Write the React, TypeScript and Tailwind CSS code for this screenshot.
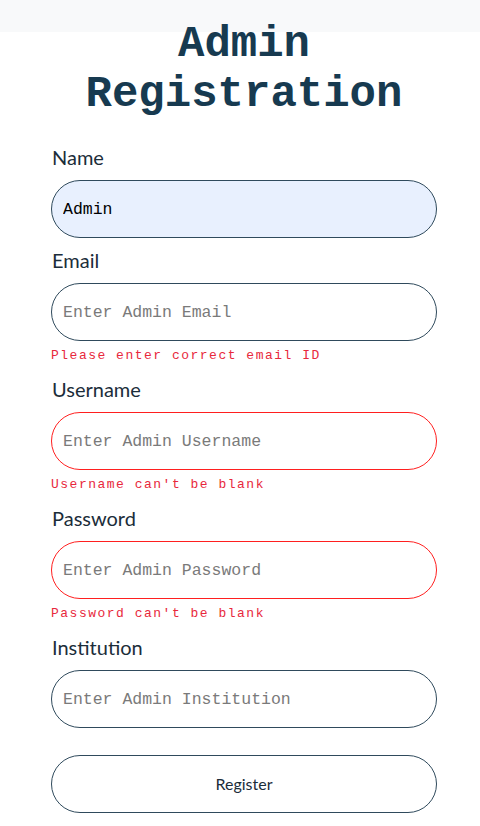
import React from "react";

const labelCls =
  "block text-[20px] leading-[30px] text-[#1b2d3a] mb-[8px] pl-[1px] font-['Lato','Open_Sans',sans-serif]";
const inputBase =
  "w-full h-[58px] rounded-full border outline-none px-[11px] text-[16.5px] font-['Courier_New','Liberation_Mono',monospace] placeholder:text-[#7a7a7a] text-black";
const errCls =
  "mt-[4px] text-[13px] leading-[22px] tracking-[1.5px] text-[#e8283c] font-['Courier_New','Liberation_Mono',monospace]";

function Field({
  label,
  placeholder,
  value,
  error,
  filled,
  first,
}: {
  label: string;
  placeholder: string;
  value?: string;
  error?: string;
  filled?: boolean;
  first?: boolean;
}) {
  const isBlank = error && error.includes("blank");
  return (
    <div className={first ? "" : "mt-[7px]"}>
      <label className={labelCls}>{label}</label>
      <input
        className={
          inputBase +
          " " +
          (isBlank ? "border-[#ff1f1f]" : "border-[#2f4a5c]") +
          " " +
          (filled ? "bg-[#e8f0fe]" : "bg-white")
        }
        placeholder={placeholder}
        defaultValue={value}
      />
      {error && <div className={errCls}>{error}</div>}
    </div>
  );
}

export default function App() {
  return (
    <div className="min-h-[826px] bg-white">
      <div className="h-[32px] bg-[#f8f9fa]" />
      <div className="pl-[51px] pr-[43px]">
        <h1 className="relative -mt-[13px] text-center text-[44px] leading-[50px] font-bold text-[#173a50] font-['Courier_New','Liberation_Mono',monospace]">
          Admin
          <br />
          Registration
        </h1>
        <form className="mt-[23px]" onSubmit={(e) => e.preventDefault()}>
          <Field label="Name" placeholder="Enter Admin Name" value="Admin" filled first />
          <Field
            label="Email"
            placeholder="Enter Admin Email"
            error="Please enter correct email ID"
          />
          <Field
            label="Username"
            placeholder="Enter Admin Username"
            error="Username can't be blank"
          />
          <Field
            label="Password"
            placeholder="Enter Admin Password"
            error="Password can't be blank"
          />
          <Field label="Institution" placeholder="Enter Admin Institution" />
          <button
            type="submit"
            className="mt-[27px] w-full h-[58px] rounded-full border border-[#2f4a5c] bg-white text-[16px] text-[#1b2d3a] font-['Lato','Open_Sans',sans-serif]"
          >
            Register
          </button>
        </form>
      </div>
    </div>
  );
}
